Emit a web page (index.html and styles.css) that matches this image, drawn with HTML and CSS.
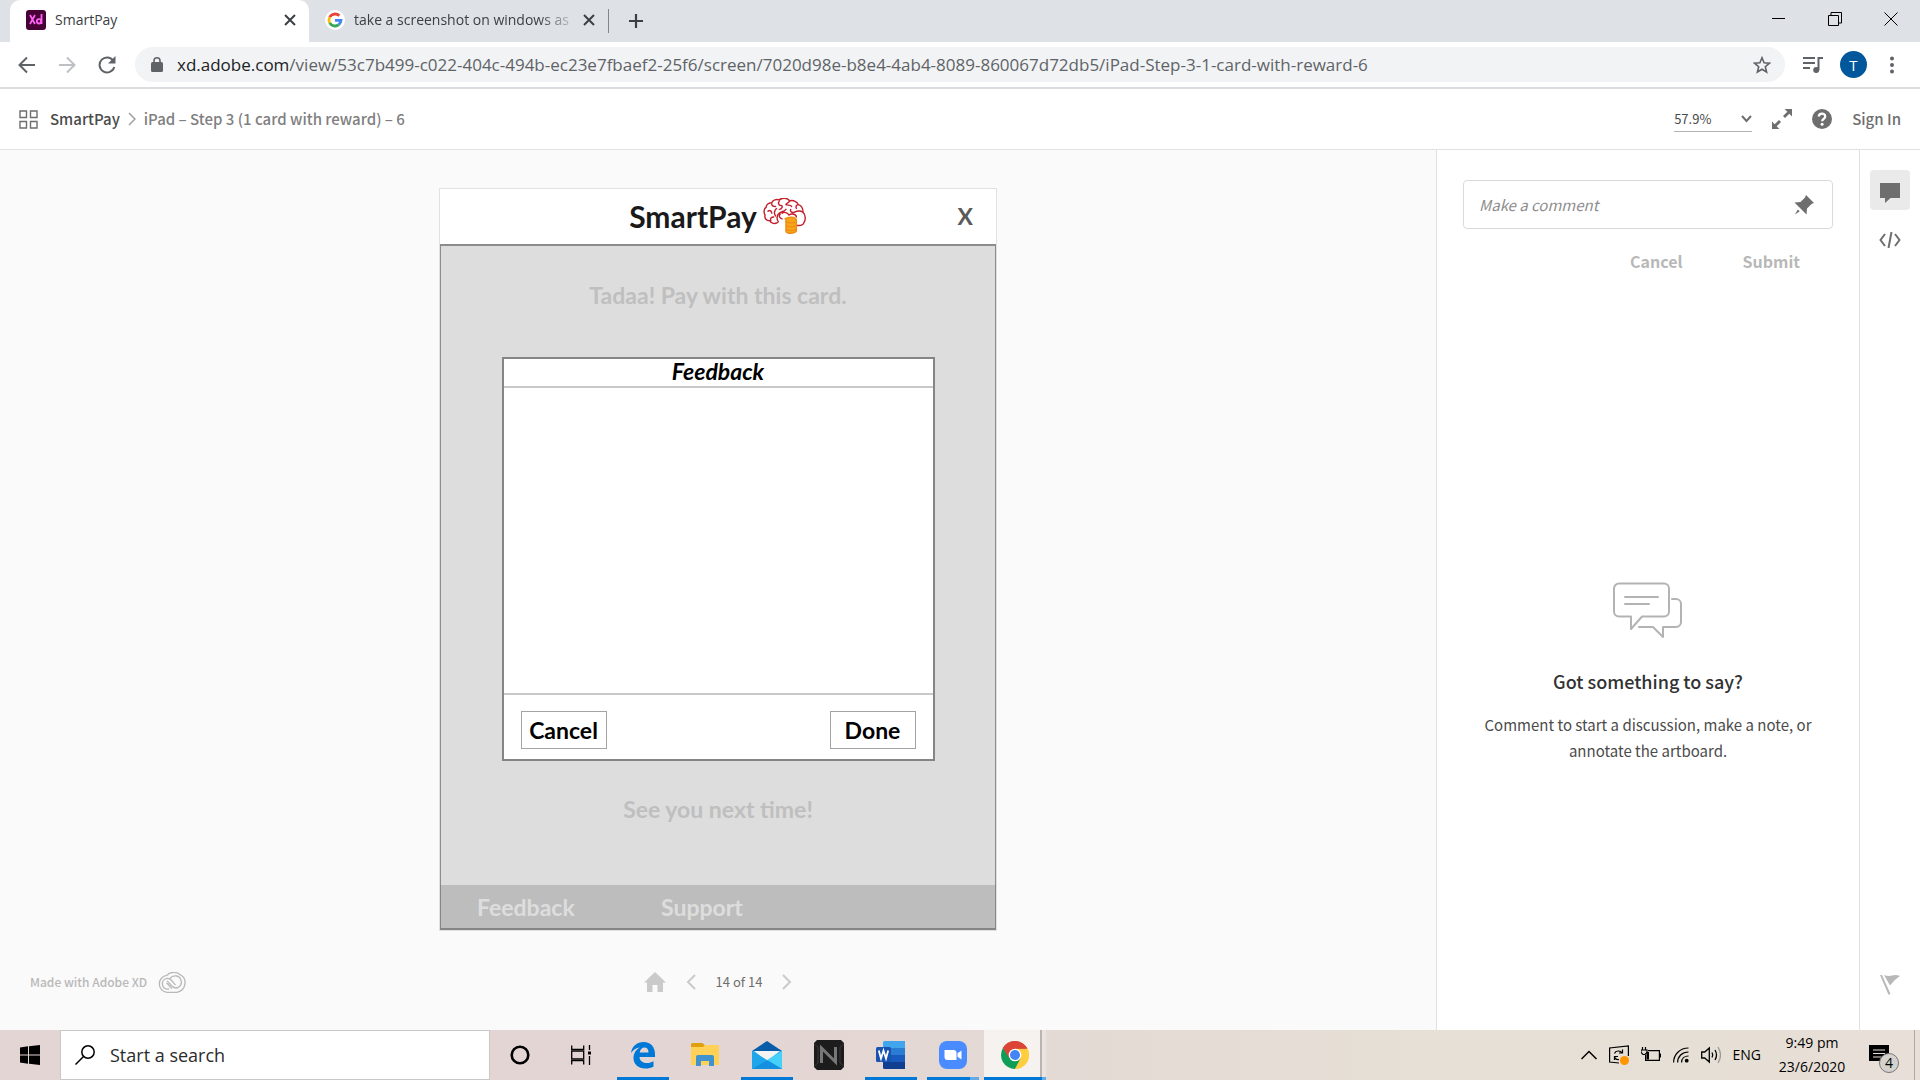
FILE: index.html
```html
<!DOCTYPE html>
<html lang="en">
<head>
<meta charset="utf-8">
<meta name="viewport" content="width=device-width, initial-scale=1">
<title>SmartPay</title>
<link rel="stylesheet" href="styles.css">
</head>
<body>
<header class="browser">
  <div class="tabstrip">
    <div class="tab tab-active">
      <svg class="favicon" width="20" height="20" viewBox="0 0 20 20"><rect width="20" height="20" rx="3" fill="#470137"/><g fill="none" stroke="#ff61f6" stroke-width="1.8"><path d="M4 5l5 9M9 5l-5 9"/><circle cx="13" cy="11.300" r="2.200"/><path d="M15.500 4v10"/></g></svg>
      <span class="tab-title">SmartPay</span>
      <button class="bare" aria-label="Close tab"><svg width="12" height="12" viewBox="0 0 12 12"><path d="M1 1l10 10M11 1L1 11" stroke="#3c4043" stroke-width="2"/></svg></button>
    </div>
    <div class="tab">
      <svg class="favicon" width="20" height="20" viewBox="0 0 20 20"><circle cx="10" cy="10" r="10" fill="#fff"/><g fill="none" stroke-width="2.800"><path d="M14.300 5.800A6 6 0 0 0 4.700 7.200" stroke="#ea4335"/><path d="M4.700 7.200a6 6 0 0 0 0 5.600" stroke="#fbbc05"/><path d="M4.700 12.800a6 6 0 0 0 9.100 1.800" stroke="#34a853"/><path d="M13.800 14.600A6 6 0 0 0 16 10.400h-6" stroke="#4285f4"/></g></svg>
      <span class="tab-title tab-fade">take a screenshot on windows as</span>
      <button class="bare" aria-label="Close tab"><svg width="12" height="12" viewBox="0 0 12 12"><path d="M1 1l10 10M11 1L1 11" stroke="#3c4043" stroke-width="2"/></svg></button>
    </div>
    <span class="tab-divider"></span>
    <button class="bare new-tab" aria-label="New tab"><svg width="16" height="16" viewBox="0 0 16 16"><path d="M8 1v14M1 8h14" stroke="#3c4043" stroke-width="2.200"/></svg></button>
    <div class="window-buttons">
      <button class="bare" aria-label="Minimise"><svg width="14" height="14" viewBox="0 0 14 14"><path d="M0 6.500h13" stroke="#000"/></svg></button>
      <button class="bare" aria-label="Restore"><svg width="14" height="14" viewBox="0 0 14 14" fill="none" stroke="#000"><path d="M.5 3.500h10v10H.5zM3 3.500v-3h10.500v10.500H11"/></svg></button>
      <button class="bare" aria-label="Close window"><svg width="14" height="14" viewBox="0 0 14 14"><path d="M.5.5l13 13M13.500.5l-13 13" stroke="#000"/></svg></button>
    </div>
  </div>
  <div class="toolbar">
    <nav class="history">
      <button class="bare" aria-label="Back"><svg width="18" height="18" viewBox="0 0 18 18" fill="none" stroke="#5f6368" stroke-width="2"><path d="M17 9H2M9 1.500L1.500 9 9 16.500"/></svg></button>
      <button class="bare" aria-label="Forward"><svg width="18" height="18" viewBox="0 0 18 18" fill="none" stroke="#bdc1c6" stroke-width="2"><path d="M1 9h15M9 1.500L16.500 9 9 16.500"/></svg></button>
      <button class="bare" aria-label="Reload"><svg width="18" height="18" viewBox="0 0 18 18" fill="none" stroke="#5f6368" stroke-width="2"><path d="M15.500 5A7.500 7.500 0 1 0 16.300 11"/><path d="M17.500 0v7.500H10z" fill="#5f6368" stroke="none"/></svg></button>
    </nav>
    <div class="address">
      <svg width="12" height="15" viewBox="0 0 12 15"><rect y="5" width="12" height="10" rx="1.500" fill="#5f6368"/><path d="M3 6V3.800a3 3 0 0 1 6 0V6" fill="none" stroke="#5f6368" stroke-width="1.600"/></svg>
      <p class="url"><span class="host">xd.adobe.com</span>/view/53c7b499-c022-404c-494b-ec23e7fbaef2-25f6/screen/7020d98e-b8e4-4ab4-8089-860067d72db5/iPad-Step-3-1-card-with-reward-6</p>
      <button class="bare" aria-label="Bookmark"><svg width="18" height="18" viewBox="0 0 18 18"><path d="M9 1.800l2.100 5 5.300.4-4.100 3.500 1.300 5.300L9 13.200 4.400 16l1.300-5.300-4.100-3.500 5.300-.4z" fill="none" stroke="#5f6368" stroke-width="1.600"/></svg></button>
    </div>
    <div class="tool-end">
      <button class="bare" aria-label="Media"><svg width="20" height="18" viewBox="0 0 20 18" fill="none" stroke="#5f6368" stroke-width="2"><path d="M0 2h12M0 7h12M0 12h7M15.500 14V2H20"/><circle cx="13.200" cy="14" r="3" fill="#5f6368" stroke="none"/></svg></button>
      <button class="bare avatar">T</button>
      <button class="bare" aria-label="Menu"><svg width="4" height="18" viewBox="0 0 4 18" fill="#5f6368"><circle cx="2" cy="2.500" r="2"/><circle cx="2" cy="9" r="2"/><circle cx="2" cy="15.500" r="2"/></svg></button>
    </div>
  </div>
</header>

<div class="xd-header">
  <svg width="19" height="19" viewBox="0 0 19 19" fill="none" stroke="#6e6e6e" stroke-width="1.400"><path d="M1 1h6.500v6.500H1zM11.500 1H18v6.500h-6.500zM1 11.500h6.500V18H1zM11.500 11.500H18V18h-6.500z"/></svg>
  <a class="crumb crumb-home" href="#">SmartPay</a>
  <svg width="8" height="14" viewBox="0 0 8 14" fill="none" stroke="#a0a0a0" stroke-width="1.500"><path d="M1 1l6 6-6 6"/></svg>
  <span class="crumb">iPad – Step 3 (1 card with reward) – 6</span>
  <div class="xd-tools">
    <button class="bare zoom">57.9%<svg width="11" height="8" viewBox="0 0 11 8" fill="none" stroke="#6e6e6e" stroke-width="2"><path d="M1 1l4.500 5L10 1"/></svg></button>
    <button class="bare" aria-label="Full screen"><svg width="20" height="20" viewBox="0 0 20 20" fill="#6e6e6e"><path d="M20 0v7.500L17.300 4.800 13 9.100 11 7.100l4.300-4.400L12.700 0zM0 20v-7.500l2.700 2.700L7 11l2 2-4.300 4.300L7.300 20z"/></svg></button>
    <button class="bare" aria-label="Help"><svg width="20" height="20" viewBox="0 0 20 20"><circle cx="10" cy="10" r="10" fill="#6e6e6e"/><path d="M6.800 7.500C7 3.500 13.300 3.700 13.200 7.500c0 2.200-3 2.500-3 4.700" fill="none" stroke="#fff" stroke-width="2.300"/><circle cx="10.100" cy="15.300" r="1.500" fill="#fff"/></svg></button>
    <a class="sign-in" href="#">Sign In</a>
  </div>
</div>

<main class="workspace">
  <section class="canvas">
    <div class="artboard">
      <div class="art-header">
        <h1>SmartPay</h1>
        <svg width="44" height="36" viewBox="0 0 46 38" fill="none" stroke="#c4202b" stroke-width="1.500" stroke-linecap="round" stroke-linejoin="round"><path d="M15 26c-4 2-7 0-8-2-4 0-6-3-5-6-2-3-1-7 1-8 0-3 3-5 6-5 1-3 5-4 8-3 3-3 9-2 11 1 4-1 8 1 9 4 4 1 5 5 5 8 3 3 3 8 1 11-1 4-5 3-8 3"/><path d="M5 14c2-2 4 0 4 2M8 24c-1-3 1-4 3-4M9 6c0 3 2 3 4 3M17 3c-2 3 0 5 2 5s1 4-2 4M28 3c-1 3-4 2-4 4 2 1 5 0 6 2M37 7c-2 0-3 2-2 4M42 15c-3-2-7-1-9 0-3 1-5-1-4-3M24 12c-2 3-5 2-7 4-3 2-3 7-1 9M20 16c2-2 6 0 7 2 3-2 8-1 8 2M20 22c-3-1-4-3-2-5M14 11c-2 2-3 5-1 8"/><path d="M23 22c4-3 11-2 12 1v12c-2 3-10 3-11 0V22z" fill="#f6a51b" stroke="#ef8f16"/><path d="M24 25c3 2 8 2 11 0M24 29c3 2 8 2 11 0M24 33c3 2 8 2 11 0" stroke="#e88415" stroke-width="1"/></svg>
        <button class="bare art-close">X</button>
      </div>
      <div class="art-body">
        <p class="ghost">Tadaa! Pay with this card.</p>
        <form class="feedback">
          <label class="feedback-title" for="feedback-text">Feedback</label>
          <textarea id="feedback-text"></textarea>
          <div class="feedback-actions">
            <button type="button">Cancel</button>
            <button type="button">Done</button>
          </div>
        </form>
        <p class="ghost">See you next time!</p>
      </div>
      <nav class="art-footer"><a href="#">Feedback</a><a href="#">Support</a></nav>
    </div>
    <div class="canvas-footer">
      <div class="made-with">Made with Adobe XD
        <svg width="28" height="21" viewBox="0 0 28 21" fill="none" stroke="#b8b8b8" stroke-width="1.300"><path d="M9 20.300A8.500 8.500 0 0 1 8.800 3.400C12-.5 19-.6 22.500 3c6.500 3 6.500 15-3.500 17.300z"/><path d="M11 17C3.500 18 2 8.500 8.500 6.500c4.500-1 5.500 3 9 6.500M14 16.500c-2-1.500-3.500-4-5.500-5.500M12 6.500c3-4 9-3 10.500.5 2.500 4-.5 9-4.500 9-4 0-6-5-9-7"/></svg>
      </div>
      <nav class="pager">
        <button class="bare" aria-label="First screen"><svg width="22" height="20" viewBox="0 0 22 20" fill="#cacaca"><path d="M11 0l11 10.500h-3V20h-5.500v-7h-5v7H3v-9.500H0z"/></svg></button>
        <button class="bare" aria-label="Previous screen"><svg width="10" height="16" viewBox="0 0 10 16" fill="none" stroke="#cacaca" stroke-width="2"><path d="M9 1L2 8l7 7"/></svg></button>
        <span>14 of 14</span>
        <button class="bare" aria-label="Next screen"><svg width="10" height="16" viewBox="0 0 10 16" fill="none" stroke="#cacaca" stroke-width="2"><path d="M1 1l7 7-7 7"/></svg></button>
      </nav>
    </div>
  </section>

  <aside class="comments">
    <div class="comment-box">
      <input type="text" placeholder="Make a comment" aria-label="Make a comment">
      <button class="bare" aria-label="Pin"><svg width="20" height="20" viewBox="0 0 20 20" fill="#6e6e6e"><path d="M12 0l8 8-2.500 1-4.500 4.500-.5 6-5-5L5 12 .5 7.500l6-.5L11 2.500z"/><path d="M3.800 14.400l1.900 1.900L1 19.500z"/></svg></button>
    </div>
    <div class="comment-actions">
      <button class="bare">Cancel</button>
      <button class="bare">Submit</button>
    </div>
    <div class="empty">
      <svg width="70" height="56" viewBox="0 0 70 56" fill="none" stroke="#b3b3b3" stroke-width="2" stroke-linejoin="round" stroke-linecap="round"><path d="M6 1.500h45a5 5 0 0 1 5 5v23a5 5 0 0 1-5 5H29L18 47V34.500H6a5 5 0 0 1-5-5v-23a5 5 0 0 1 5-5zM12 15h33M12 22h24M59 17h4a5 5 0 0 1 5 5v18a5 5 0 0 1-5 5H50v10L40 45H26"/></svg>
      <h2>Got something to say?</h2>
      <p>Comment to start a discussion, make a note, or annotate the artboard.</p>
    </div>
  </aside>

  <nav class="rail">
    <button class="bare rail-button rail-active" aria-label="Comments"><svg width="20" height="20" viewBox="0 0 20 20" fill="#6e6e6e"><path d="M0 0h20v15h-9.500L5 20v-5H0z"/></svg></button>
    <button class="bare rail-button" aria-label="Specs"><svg width="22" height="16" viewBox="0 0 22 16" fill="none" stroke="#6e6e6e" stroke-width="2"><path d="M6 2L1.500 8 6 14M16 2l4.500 6-4.500 6M12.500 0l-3 16"/></svg></button>
    <button class="bare rail-button rail-flag" aria-label="Report"><svg width="20" height="20" viewBox="0 0 20 20" fill="#b8b8b8"><path d="M0 0h2l8.500 19-2 .8zM4 0q4 1.500 8 .500T20 1q-5 3-10 9.500z"/></svg></button>
  </nav>
</main>

<footer class="taskbar">
  <button class="bare start" aria-label="Start"><svg width="20" height="20" viewBox="0 0 20 20"><path d="M0 2.500l8-1.200v8.200H0zM9 1.200L20 0v9.500H9zM0 10.500h8v8.200l-8-1.200zM9 10.500h11V20L9 18.800z"/></svg></button>
  <label class="search">
    <svg width="20" height="20" viewBox="0 0 20 20" fill="none" stroke="#000" stroke-width="1.500"><circle cx="13" cy="7" r="6.200"/><path d="M8.500 11.500L.5 19.500"/></svg>
    <input type="text" placeholder="Start a search" aria-label="Start a search">
  </label>
  <div class="apps">
    <button class="bare app" aria-label="Cortana"><svg width="20" height="20" viewBox="0 0 20 20"><circle cx="10" cy="10" r="8.300" fill="none" stroke="#000" stroke-width="2.600"/></svg></button>
    <button class="bare app" aria-label="Task view"><svg width="20" height="20" viewBox="0 0 20 20" fill="none" stroke="#000" stroke-width="1.300"><path d="M.7.500v3.800h12V.500M.7 6h12v8H.7zM.7 19.500v-3.800h12v3.800M18.500 0v5M18.500 11v9"/><path d="M17 6.500h3v3h-3z" fill="#000" stroke="none"/></svg></button>
    <button class="bare app app-open" aria-label="Edge"><svg width="26" height="28" viewBox="0 0 26 28"><path d="M1 12C2 5 7 1 13.500 1 21 1 25 6.500 25 13v3H9.500c.3 4 3.500 6 7.500 6 2.500 0 4.500-.6 6.500-1.800v5.300C21 27 18.500 27.500 15.500 27.500 8 27.500 3.500 23 3.500 17c0-4.500 2.500-8.500 6.500-10.500C6 6.500 3 9 1 12zm8.700-.5h8.800C18.500 8 17 6.500 14.500 6.500S10 8.500 9.700 11.500z" fill="#0078d7" fill-rule="evenodd"/></svg></button>
    <button class="bare app" aria-label="File Explorer"><svg width="28" height="24" viewBox="0 0 28 24"><path d="M0 1.500A1.500 1.500 0 0 1 1.500 0h10l3 3v6H0z" fill="#e09f0c"/><path d="M0 4h12l2-2h12.500A1.500 1.500 0 0 1 28 3.500V22H0z" fill="#ffd257"/><path d="M5 23v-9a2 2 0 0 1 2-2h14a2 2 0 0 1 2 2v9h-5v-5h-8v5z" fill="#3f93cf"/></svg></button>
    <button class="bare app app-open" aria-label="Mail"><svg width="30" height="28" viewBox="0 0 30 28"><path d="M0 10L15 0l15 10z" fill="#075da9"/><path d="M0 10h30v18H0z" fill="#23a9ed"/><path d="M2 10h26L15 20z" fill="#f3f3f3"/><path d="M30 10v18L15 19z" fill="#45d0fa"/><path d="M0 28h30L15 19z" fill="#1390df"/><path d="M0 10v18l15-9z" fill="#1fa6ea"/></svg></button>
    <button class="bare app" aria-label="N app"><svg width="30" height="30" viewBox="0 0 30 30"><path d="M3 0h24l3 3v24l-3 3H3l-3-3V3z" fill="#1c1c1c"/><path d="M0 4l4 3v16l-4 3M30 4l-4 3v16l4 3" fill="none" stroke="#393939"/><path d="M7.500 23V8l14 14V7" fill="none" stroke="#777" stroke-width="3"/></svg></button>
    <button class="bare app app-open" aria-label="Word"><svg width="30" height="28" viewBox="0 0 30 28"><path d="M7 1.500A1.500 1.500 0 0 1 8.500 0H29v7H7z" fill="#41a5ee"/><path d="M7 7h22v7H7z" fill="#2b7cd3"/><path d="M7 14h22v7H7z" fill="#185abd"/><path d="M7 21h22v7H8.500A1.500 1.500 0 0 1 7 26.500z" fill="#103f91"/><rect y="6" width="15" height="15" rx="1.500" fill="#1953b0"/><path d="M2.800 9.500l2.200 8 2.500-8 2.500 8 2.200-8" fill="none" stroke="#fff" stroke-width="1.800"/></svg></button>
    <button class="bare app app-open app-stack" aria-label="Zoom"><svg width="28" height="28" viewBox="0 0 28 28"><rect width="28" height="28" rx="8" fill="#4a8cff"/><path d="M5.500 9h9a3 3 0 0 1 3 3v7h-9a3 3 0 0 1-3-3zM18.500 12.300L22.500 9.500v9l-4-2.800z" fill="#fff"/></svg></button>
    <button class="bare app app-open app-current" aria-label="Chrome"><svg width="28" height="28" viewBox="0 0 28 28"><path d="M14 14L1.900 7A14 14 0 0 1 26.100 7z" fill="#db4437"/><path d="M14 14l12.100-7A14 14 0 0 1 14 28z" fill="#ffcd40"/><path d="M14 14l5.500 3.500L14 28A14 14 0 0 1 1.900 7z" fill="#0f9d58"/><path d="M14 7.500h12.400A14 14 0 0 1 14 28l6-10z" fill="#ffcd40"/><path d="M1.900 7A14 14 0 0 1 26.400 7.700H14l-6 9z" fill="#db4437"/><circle cx="14" cy="14" r="6.300" fill="#fff"/><circle cx="14" cy="14" r="5" fill="#4285f4"/></svg></button>
  </div>
  <div class="tray">
    <button class="bare" aria-label="Show hidden icons"><svg width="16" height="10" viewBox="0 0 16 10" fill="none" stroke="#000" stroke-width="1.500"><path d="M.5 9L8 1.500 15.500 9"/></svg></button>
    <svg width="20" height="20" viewBox="0 0 20 20" fill="none" stroke="#000" stroke-width="1.200"><path d="M10 18L.6 17V3L19.400 1v10"/><path d="M5.500 8.500c1-3 6-3.500 7.500-.5M13.500 4.500V8H10M10 14.500c-2 .5-3.500-.5-4-2M5.500 15v-3.500H9"/><circle cx="15.500" cy="15.500" r="4.500" fill="#ff9500" stroke="none"/></svg>
    <svg width="20" height="16" viewBox="0 0 20 16" fill="none" stroke="#000" stroke-width="1.200"><path d="M7 3.600h11.400v9.800H4.600V8M19.400 6.500v4M1.500 0v3M4.500 0v3M0 3h6v2.500L4 7.500H2L0 5.500z"/><path d="M5.500 5H8v7.500H5.500z" fill="#000" stroke="none"/></svg>
    <svg width="16" height="16" viewBox="0 0 16 16" fill="none" stroke="#000" stroke-width="1.200"><path d="M.6 15.500C.6 7.500 7 1 15.500 1M4.600 15.500C4.600 9.500 9 5 15.500 5M8.600 15.500c0-4 2.900-6.500 6.900-6.500"/><circle cx="13.700" cy="13.700" r="1.900" fill="#000" stroke="none"/></svg>
    <svg width="20" height="18" viewBox="0 0 20 18" fill="none" stroke="#000" stroke-width="1.300"><path d="M.7 6h3L8.300 2v14l-4.600-4h-3zM11 6.500q1.500 2.500 0 5M14 4q3 5 0 10"/><path d="M17 1q5 8 0 16" stroke="#999"/></svg>
    <span class="lang">ENG</span>
    <p class="clock">9:49 pm<br>23/6/2020</p>
    <button class="bare notices" aria-label="Notifications"><svg width="20" height="20" viewBox="0 0 20 20"><path d="M0 0h20v16h-5l-4 4v-4H0z"/><path d="M4 5h12M4 8.500h12M4 12h8" stroke="#e6dfd6"/></svg><span class="badge">4</span></button>
    <span class="desktop-edge"></span>
  </div>
</footer>
</body>
</html>
```
FILE: styles.css
```css
* { box-sizing: border-box; }

body {
  margin: 0;
  min-height: 100vh;
  display: flex;
  flex-direction: column;
  background: #fff;
  color: #4b4b4b;
  font: 15px/24px "Noto Sans CJK SC", "Noto Sans", sans-serif;
}

p, h1, h2 { margin: 0; }
a { color: inherit; text-decoration: none; }
svg { display: block; flex: none; }
button, input, textarea { font: inherit; color: inherit; }

.bare {
  display: flex;
  align-items: center;
  justify-content: center;
  padding: 0;
  border: 0;
  background: none;
}

/* Browser chrome */
.browser {
  border-bottom: 2px solid #dadce0;
  font-family: "Open Sans", "Noto Sans", sans-serif;
}
.tabstrip {
  display: flex;
  align-items: center;
  height: 42px;
  padding-left: 10px;
  background: #dee1e6;
}
.tab {
  display: flex;
  align-items: center;
  width: 299px;
  height: 42px;
  padding: 0 13px 2px 16px;
  font-size: 14px;
  color: #3c4043;
}
.tab-active { border-radius: 10px 10px 0 0; background: #fff; }
.favicon { margin-right: 9px; }
.tab-title { flex: 1; overflow: hidden; white-space: nowrap; }
.tab-fade {
  margin-right: 4px;
  -webkit-mask-image: linear-gradient(90deg, #000 82%, transparent);
  mask-image: linear-gradient(90deg, #000 82%, transparent);
}
.tab-divider { width: 1px; height: 24px; background: #80868b; }
.new-tab { margin-left: 19px; }
.window-buttons {
  display: flex;
  gap: 42px;
  margin-left: auto;
  padding: 0 22px 4px 0;
}
.toolbar { display: flex; align-items: center; height: 45px; }
.history { display: flex; gap: 22px; width: 135px; padding-left: 18px; }
.address {
  display: flex;
  flex: 1;
  align-items: center;
  gap: 14px;
  min-width: 0;
  height: 35px;
  padding: 0 14px 0 16px;
  border-radius: 18px;
  background: #f1f3f4;
}
.url {
  flex: 1;
  overflow: hidden;
  white-space: nowrap;
  font-size: 17px;
  color: #5f6368;
}
.host { color: #202124; }
.tool-end {
  display: flex;
  align-items: center;
  gap: 17px;
  width: 135px;
  padding-left: 18px;
}
.avatar {
  width: 27px;
  height: 27px;
  border-radius: 50%;
  background: #01579b;
  color: #fff;
}
.avatar + button { margin-left: 6px; }

/* Prototype header */
.xd-header {
  display: flex;
  align-items: center;
  gap: 8px;
  height: 61px;
  padding: 0 19px;
  border-bottom: 1px solid #e1e1e1;
}
.xd-header > svg:first-child { margin-right: 4px; }
.crumb { color: #808080; font-weight: 500; }
.crumb-home { color: #4b4b4b; }
.xd-tools { display: flex; align-items: center; gap: 20px; margin-left: auto; }
.zoom {
  justify-content: space-between;
  width: 78px;
  height: 25px;
  border-bottom: 1px solid #b3b3b3;
  font-size: 13px;
}
.sign-in { color: #6e6e6e; font-weight: 500; }

/* Workspace */
.workspace { display: flex; flex: 1; }
.canvas {
  display: flex;
  flex: 1;
  flex-direction: column;
  align-items: center;
  justify-content: space-between;
  padding-top: 38px;
  background: #fafafa;
}
.artboard {
  width: 558px;
  border: 1px solid #e1e1e1;
  background: #fff;
  color: #000;
  font: bold 23px/28px Lato, sans-serif;
}
.art-header {
  display: grid;
  grid-template-columns: 1fr auto auto 1fr;
  align-items: center;
  gap: 6px;
  height: 55px;
  padding-bottom: 2px;
}
.art-header h1 {
  grid-column: 2;
  color: #1a1a1a;
  font-size: 30px;
  line-height: 36px;
}
.art-close { justify-self: end; margin-right: 23px; color: #5a5a5a; }
.art-body {
  display: flex;
  flex-direction: column;
  align-items: center;
  padding: 35px 0 62px;
  border: solid #8c8c8c;
  border-width: 2px 1px 0;
  background: #dddddd;
}
.ghost { color: #bfbfbf; }
.feedback {
  display: flex;
  flex-direction: column;
  width: 433px;
  margin: 48px 0 34px;
  border: 2px solid #858585;
  background: #fff;
}
.feedback-title {
  height: 27px;
  line-height: 24px;
  font-style: italic;
  text-align: center;
}
.feedback textarea {
  height: 309px;
  border: solid #c8c8c8;
  border-width: 2px 0;
  border-radius: 0;
  background: none;
  resize: none;
  outline: 0;
}
.feedback-actions { display: flex; justify-content: space-between; padding: 16px 17px 10px; }
.feedback-actions button {
  width: 86px;
  height: 38px;
  padding: 0;
  border: 1px solid #a3a3a3;
  background: #fff;
}
.art-footer {
  display: grid;
  grid-template-columns: 184px 1fr;
  height: 45px;
  padding: 8px 0 0 36px;
  border: solid #858585;
  border-width: 0 1px 2px;
  background: #bdbdbd;
  color: #dddddd;
}
.canvas-footer {
  display: grid;
  grid-template-columns: 1fr auto 1fr;
  align-items: center;
  width: 100%;
  padding: 0 30px 36px;
}
.made-with {
  display: flex;
  align-items: center;
  gap: 11px;
  color: #b8b8b8;
  font-size: 12px;
  font-weight: 500;
}
.pager {
  display: flex;
  align-items: center;
  gap: 20px;
  color: #6e6e6e;
  font-size: 13px;
}

/* Comments */
.comments {
  display: flex;
  flex-direction: column;
  width: 423px;
  padding: 30px 26px 0;
  border-left: 1px solid #e1e1e1;
}
.comment-box {
  display: flex;
  align-items: center;
  height: 49px;
  padding: 0 18px 0 15px;
  border: 1px solid #dadada;
  border-radius: 4px;
}
.comment-box input {
  flex: 1;
  min-width: 0;
  padding: 0;
  border: 0;
  outline: 0;
  background: none;
}
.comment-box input::placeholder { color: #8e8e8e; font-style: italic; }
.comment-actions {
  display: flex;
  justify-content: flex-end;
  gap: 60px;
  padding: 20px 33px 0 0;
  color: #b8b8b8;
  font-size: 16px;
  font-weight: bold;
}
.empty {
  display: flex;
  flex: 1;
  flex-direction: column;
  align-items: center;
  justify-content: center;
  padding-top: 42px;
  text-align: center;
  line-height: 26px;
}
.empty h2 {
  margin: 30px 0 18px;
  color: #323232;
  font-size: 18px;
  font-weight: 500;
  line-height: 26px;
}
.rail {
  display: flex;
  flex-direction: column;
  align-items: center;
  gap: 10px;
  width: 61px;
  padding: 20px 0 25px;
  border-left: 1px solid #e1e1e1;
}
.rail-button { width: 40px; height: 40px; border-radius: 4px; }
.rail-active { padding-top: 5px; background: #eaeaea; }
.rail-flag { margin-top: auto; }

/* Taskbar */
.taskbar {
  display: flex;
  height: 50px;
  background: linear-gradient(90deg, #e3d5d3 0%, #e3d5d3 40%, #e6e0d6 75%, #e6dfd5 90%, #e9dfd9 100%);
  color: #000;
  font: 16px/24px "Open Sans", "Noto Sans", sans-serif;
}
.start { width: 60px; }
.search {
  display: flex;
  align-items: center;
  gap: 15px;
  width: 430px;
  padding: 0 14px;
  border: 1px solid #c8c8c8;
  background: #fff;
}
.search input {
  flex: 1;
  min-width: 0;
  padding: 0;
  border: 0;
  outline: 0;
  background: none;
  font-size: 18px;
}
.search input::placeholder { color: #2b2b2b; opacity: 1; }
.apps { display: flex; }
.app { width: 62px; border: solid transparent; border-width: 0 5px; }
.app:first-child { width: 60px; }
.app-open {
  background: linear-gradient(#0078d7, #0078d7) bottom / 100% 3px no-repeat padding-box;
}
.app-stack {
  background: linear-gradient(90deg, #0078d7 82%, #62abe6 82%) bottom / 100% 3px no-repeat padding-box;
}
.app-current {
  border-width: 0;
  background:
    linear-gradient(90deg, #0078d7 93%, #62abe6 93%) bottom / 100% 3px no-repeat,
    linear-gradient(90deg, #f5f2f0 91%, #b9b4b0 91% 93%, #e9e4e1 93%);
}
.tray {
  display: flex;
  align-items: center;
  gap: 12px;
  margin-left: auto;
  padding-right: 5px;
  font-size: 14px;
}
.tray .clock { width: 78px; text-align: center; }
.notices { position: relative; margin-left: 6px; }
.badge {
  position: absolute;
  top: 8px;
  left: 10px;
  width: 20px;
  border: 1px solid #777;
  border-radius: 50%;
  background: #d5d2ce;
  font-size: 14px;
  line-height: 18px;
}
.desktop-edge { align-self: stretch; width: 1px; margin-left: 13px; background: #b0aaa3; }
```
